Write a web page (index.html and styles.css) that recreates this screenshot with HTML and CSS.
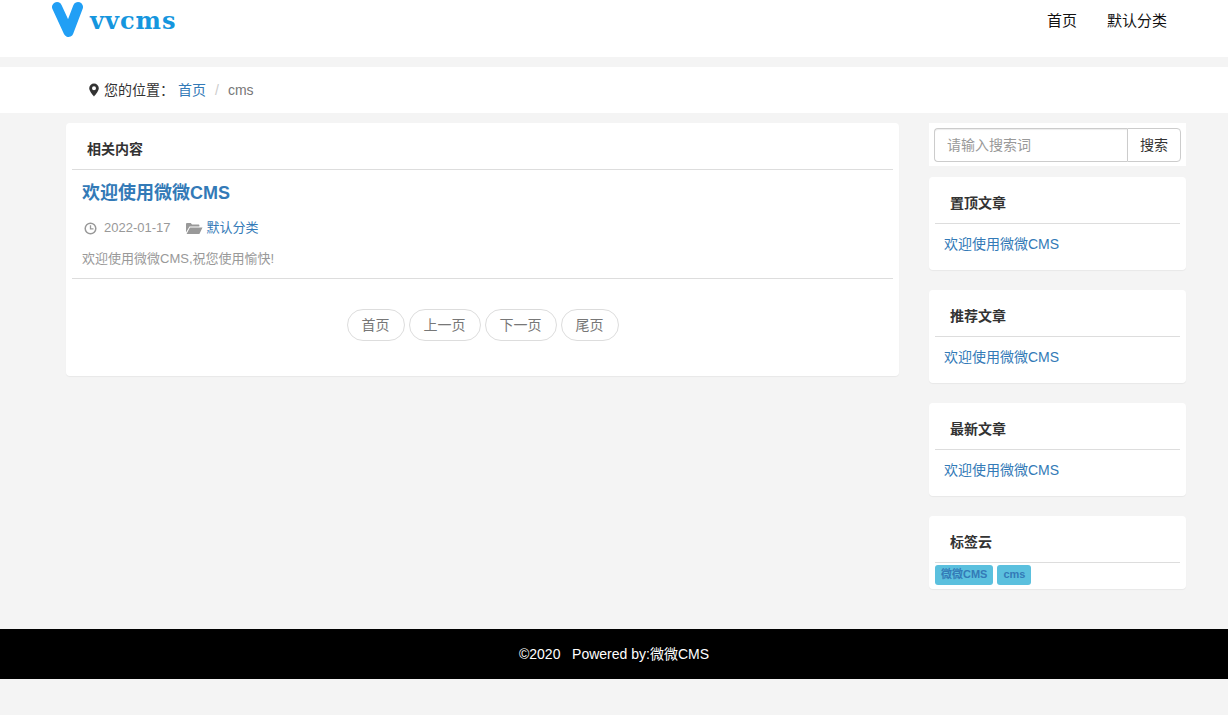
FILE: index.html
```html
<!DOCTYPE html>
<html lang="zh">
<head>
  <meta charset="UTF-8" />
  <title>微微CMS</title>
  <link rel="stylesheet" href="styles.css">
</head>
<body>
  <header class="top">
    <a class="logo" href="#">
      <svg class="logo-mark" width="36" height="40" viewBox="0 0 36 40"><path d="M6 7 L17.500 32 L27 7" fill="none" stroke="#219ff5" stroke-width="10" stroke-linecap="round" stroke-linejoin="round"/></svg>
      <span class="logo-text">vvcms</span>
    </a>
    <nav class="nav">
      <a href="#">首页</a>
      <a href="#">默认分类</a>
    </nav>
  </header>

  <div class="crumbs">
    <svg class="pin" width="12" height="14" viewBox="0 0 12 14"><path fill-rule="evenodd" fill="#333" d="M6 0.500a4.800 4.800 0 0 0-4.800 4.800c0 3 4.800 8.200 4.800 8.200s4.800-5.200 4.800-8.200A4.800 4.800 0 0 0 6 0.500zm0 2.800a2 2 0 1 1 0 4 2 2 0 0 1 0-4z"/></svg>
    <span class="crumbs-label">您的位置：</span>
    <a href="#">首页</a>
    <span class="sep">/</span>
    <span class="current">cms</span>
  </div>

  <div class="wrap">
    <main class="card main">
      <h4 class="card-title">相关内容</h4>
      <article class="post">
        <h3 class="post-title"><a href="#">欢迎使用微微CMS</a></h3>
        <div class="meta">
          <svg class="meta-icon" width="13" height="13" viewBox="0 0 13 13"><circle cx="6.500" cy="6.500" r="5.300" fill="none" stroke="#999" stroke-width="1.500"/><path d="M6.500 3.200V6.800H9.500" fill="none" stroke="#999" stroke-width="1.300"/></svg>
          <span class="date">2022-01-17</span>
          <svg class="meta-icon folder" width="17" height="13" viewBox="0 0 17 13"><path fill="#999" d="M0 2.200C0 1.400.5 1 1.200 1h3.600l1.200 1.500h6.300c.7 0 1.100.4 1.100 1V4.500H3.500L0 10.500zM3.900 5.500H16.500L13.400 12H.6z"/></svg>
          <a href="#">默认分类</a>
        </div>
        <p class="summary">欢迎使用微微CMS,祝您使用愉快!</p>
      </article>
      <div class="pager">
        <a href="#">首页</a>
        <a href="#">上一页</a>
        <a href="#">下一页</a>
        <a href="#">尾页</a>
      </div>
    </main>

    <aside class="side">
      <form class="search">
        <input type="text" placeholder="请输入搜索词" />
        <button type="button">搜索</button>
      </form>
      <section class="card box">
        <h4 class="card-title">置顶文章</h4>
        <a class="box-link" href="#">欢迎使用微微CMS</a>
      </section>
      <section class="card box">
        <h4 class="card-title">推荐文章</h4>
        <a class="box-link" href="#">欢迎使用微微CMS</a>
      </section>
      <section class="card box">
        <h4 class="card-title">最新文章</h4>
        <a class="box-link" href="#">欢迎使用微微CMS</a>
      </section>
      <section class="card box tagbox">
        <h4 class="card-title">标签云</h4>
        <div class="tags">
          <a href="#">微微CMS</a>
          <a href="#">cms</a>
        </div>
      </section>
    </aside>
  </div>

  <footer class="foot">©2020 &nbsp; Powered by:微微CMS</footer>
</body>
</html>
```

FILE: styles.css
```css
* {
  box-sizing: border-box;
}
body {
  margin: 0;
  min-height: 715px;
  background: #f4f4f4;
  color: #333;
  font-family: "Liberation Sans", "Noto Sans CJK SC", sans-serif;
  font-size: 14px;
  line-height: 20px;
}
a {
  color: #337ab7;
  text-decoration: none;
}

/* header */
.top {
  display: flex;
  justify-content: space-between;
  height: 57px;
  padding: 0 47px 0 51px;
  background: #fff;
}
.logo {
  display: flex;
  align-items: flex-start;
  height: 42px;
}
.logo-mark {
  margin-top: 0;
}
.logo-text {
  margin: 7px 0 0 3px;
  font-family: "DejaVu Serif", serif;
  font-size: 24px;
  font-weight: bold;
  line-height: 28px;
  letter-spacing: 1px;
  color: #1596de;
}
.nav {
  display: flex;
  gap: 30px;
  padding: 0 14px 0 0;
  margin-top: 11px;
}
.nav a {
  color: #111;
  font-size: 15px;
}

/* breadcrumb */
.crumbs {
  display: flex;
  align-items: center;
  height: 46px;
  margin-top: 10px;
  padding-left: 88px;
  background: #fff;
}
.pin {
  margin-right: 4px;
}
.crumbs-label {
  margin-right: 4px;
}
.sep {
  margin: 0 9px;
  color: #ccc;
}
.current {
  color: #777;
}

/* two columns */
.wrap {
  display: flex;
  align-items: flex-start;
  gap: 30px;
  margin-top: 10px;
  padding-left: 66px;
}
.card {
  background: #fff;
  border-radius: 4px;
  box-shadow: 0 1px 1px rgba(0, 0, 0, .05);
}
.card-title {
  margin: 0;
  padding: 16px 15px 10px;
  border-bottom: 1px solid #ddd;
  font-size: 14px;
  font-weight: bold;
  line-height: 20px;
  color: #333;
}
.main {
  width: 833px;
  height: 253px;
  padding: 0 6px;
}
.post {
  padding: 11px 10px 9px;
  border-bottom: 1px solid #ddd;
}
.post-title {
  margin: 0;
  font-size: 18px;
  line-height: 24px;
}
.meta {
  display: flex;
  align-items: center;
  margin-top: 13px;
  font-size: 13px;
  color: #999;
}
.meta a {
  font-size: 13px;
}
.meta-icon {
  margin: 0 7px 0 2px;
}
.folder {
  margin: 0 4px 0 15px;
}
.summary {
  margin: 11px 0 0;
  font-size: 13px;
  color: #999;
}
.pager {
  display: flex;
  justify-content: center;
  gap: 4px;
  margin-top: 30px;
}
.pager a {
  height: 32px;
  padding: 5px 14px;
  border: 1px solid #ddd;
  border-radius: 16px;
  color: #777;
}

/* sidebar */
.side {
  display: flex;
  flex-direction: column;
  width: 257px;
}
.search {
  display: flex;
  height: 43px;
  margin-bottom: 11px;
  padding: 5px;
  background: #fff;
}
.search input {
  width: 193px;
  height: 34px;
  padding: 6px 12px;
  border: 1px solid #ccc;
  border-right: 0;
  border-radius: 4px 0 0 4px;
  font: inherit;
  box-shadow: inset 0 1px 1px rgba(0, 0, 0, .075);
}
.search input::placeholder {
  color: #999;
}
.search button {
  width: 54px;
  height: 34px;
  padding: 0;
  border: 1px solid #ccc;
  border-radius: 0 4px 4px 0;
  background: #fff;
  color: #333;
  font: inherit;
}
.box {
  height: 93px;
  margin-bottom: 20px;
  padding: 0 6px;
}
.box-link {
  display: block;
  padding: 10px 9px;
}
.tagbox {
  height: 73px;
  margin-bottom: 0;
}
.tags {
  display: flex;
  gap: 4px;
  margin-top: 2px;
}
.tags a {
  height: 20px;
  padding: 0 6px;
  border-radius: 3px;
  background: #5bc0de;
  font-size: 11px;
  font-weight: bold;
  line-height: 19px;
}

/* footer */
.foot {
  height: 50px;
  margin-top: 40px;
  background: #000;
  color: #fff;
  line-height: 50px;
  text-align: center;
}
```
